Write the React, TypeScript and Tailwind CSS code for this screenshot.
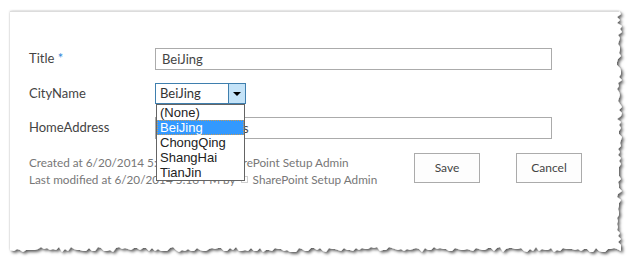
import React from 'react';

// torn paper outline, deterministic jitter along right and bottom edges
function tornPoints() {
  let seed = 11;
  const rnd = () => {
    seed = (seed * 16807) % 2147483647;
    return (seed % 1000) / 1000;
  };
  const pts: string[] = ['10,11', '619,11'];
  for (let y = 14; y < 248; y += 3) {
    const x = 617 + Math.round(rnd() * 5);
    pts.push(`${x},${y}`);
  }
  pts.push('621,251');
  for (let x = 617; x > 12; x -= 3) {
    const y = 247 + Math.round(rnd() * 5);
    pts.push(`${x},${y}`);
  }
  pts.push('10,250');
  return pts.join(' ');
}

const cities = ['(None)', 'BeiJing', 'ChongQing', 'ShangHai', 'TianJin'];

function Label({ children }: { children: React.ReactNode }) {
  return (
    <div className="w-[126px] shrink-0 text-[13px] leading-[18px] text-[#444]">{children}</div>
  );
}

export default function App() {
  return (
    <div className="relative w-[641px] h-[271px] bg-white overflow-hidden font-['Lato',sans-serif]">
      <svg className="absolute inset-0" width="641" height="271">
        <defs>
          <filter id="paperShadow" x="-5%" y="-5%" width="110%" height="115%">
            <feDropShadow dx="0" dy="0" stdDeviation="1.2" floodColor="#000" floodOpacity="0.22" />
            <feDropShadow dx="2" dy="2" stdDeviation="1.6" floodColor="#000" floodOpacity="0.6" />
          </filter>
        </defs>
        <polygon points={tornPoints()} fill="#fff" filter="url(#paperShadow)" />
        <line x1="10" y1="11.5" x2="619" y2="11.5" stroke="#dcdcdc" strokeWidth="1" />
      </svg>

      <div className="relative pl-[29px] pt-[48px]">
        {/* Title */}
        <div className="flex items-start h-[22px]">
          <Label>
            <div className="pt-[1px]">
              Title <span className="text-[#2f88d8]">*</span>
            </div>
          </Label>
          <div className="w-[397px] h-[22px] border border-[#ababab] pl-[6px] text-[13px] leading-[20px] text-[#444]">
            BeiJing
          </div>
        </div>

        {/* CityName */}
        <div className="flex items-start h-[21px] mt-[13px]">
          <Label>
            <div className="pt-[1px]">CityName</div>
          </Label>
          <div className="relative z-10">
            <div className="flex w-[91px] h-[21px] border border-[#3f7fae] bg-white">
              <div className="flex-1 pl-[4px] text-[13px] leading-[19px] text-[#333]">BeiJing</div>
              <div className="w-[17px] h-[19px] bg-[#c4e3f8] border-l border-[#3f7fae] flex items-center justify-center">
                <div className="w-0 h-0 border-l-[4px] border-r-[4px] border-t-[4px] border-l-transparent border-r-transparent border-t-black" />
              </div>
            </div>
            {/* open list */}
            <div className="absolute left-[1px] top-[21px] w-[89px] border border-[#646464] bg-white font-['Liberation_Sans',Arial,sans-serif] text-[13px] leading-[15px] text-[#222]">
              {cities.map((c) => (
                <div
                  key={c}
                  className={
                    c === 'BeiJing'
                      ? 'h-[15px] pl-[2px] bg-[#3399ff] text-white border border-dotted border-[#c89a58] leading-[13px]'
                      : 'h-[15px] pl-[3px]'
                  }
                >
                  {c}
                </div>
              ))}
            </div>
          </div>
        </div>

        {/* HomeAddress */}
        <div className="flex items-start h-[22px] mt-[13px]">
          <Label>
            <div className="pt-[1px]">HomeAddress</div>
          </Label>
          <div className="w-[397px] h-[22px] border border-[#ababab] pl-[6px] text-[13px] leading-[20px] text-[#444] whitespace-nowrap">
            Haidian Streets
          </div>
        </div>

        {/* Footer */}
        <div className="flex items-start mt-[14px]">
          <div className="w-[385px] shrink-0 pt-[1px] text-[11.75px] leading-[17px] text-[#777] whitespace-nowrap">
            <div className="flex items-center">
              Created at 6/20/2014 5:16 PM by
              <span className="inline-block w-[7px] h-[7px] border border-[#cfcfcf] mx-[5px]" />
              SharePoint Setup Admin
            </div>
            <div className="flex items-center">
              Last modified at 6/20/2014 5:16 PM by
              <span className="inline-block w-[7px] h-[7px] border border-[#cfcfcf] mx-[5px]" />
              SharePoint Setup Admin
            </div>
          </div>
          <button className="w-[66px] h-[30px] border border-[#ababab] bg-[#fdfdfd] text-[12px] text-[#444]">
            Save
          </button>
          <button className="ml-[36px] w-[66px] h-[30px] border border-[#ababab] bg-[#fdfdfd] text-[12px] text-[#444]">
            Cancel
          </button>
        </div>
      </div>
    </div>
  );
}
